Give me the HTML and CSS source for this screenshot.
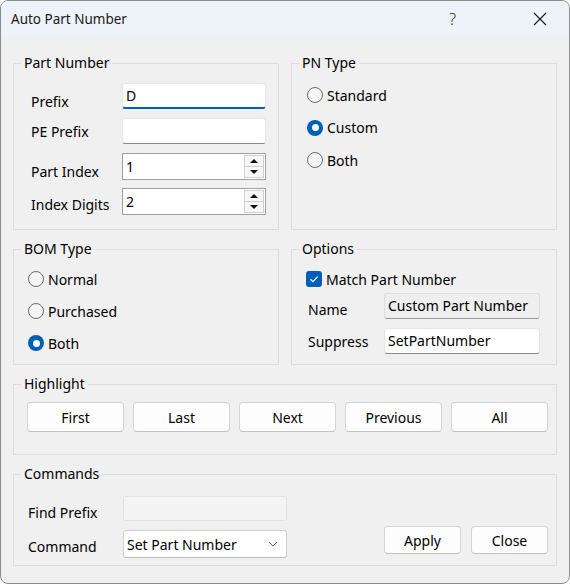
FILE: index.html
```html
<!DOCTYPE html>
<html lang="en">
<head>
  <meta charset="UTF-8">
  <title>Auto Part Number</title>
  <link rel="stylesheet" href="styles.css">
</head>
<body>

<div class="window">
  <div class="titlebar">
    <span class="title">Auto Part Number</span>
    <span class="help">?</span>
    <span class="close">
      <svg width="14" height="14" viewBox="0 0 14 14"><path d="M1 1 L13 13 M13 1 L1 13" stroke="#1a1a1a" stroke-width="1.1" fill="none"/></svg>
    </span>
  </div>

  <div class="content">
    <div class="row-two">
      <fieldset class="group">
        <legend>Part Number</legend>
        <div class="form part-number">
          <span class="lbl low">Prefix</span>
          <div class="field focused">D</div>
          <span class="lbl">PE Prefix</span>
          <div class="field"></div>
          <span class="lbl low">Part Index</span>
          <div class="spin">
            <span class="spin-value">1</span>
            <div class="spin-btns">
              <span class="spin-btn"><span class="tri up"></span></span>
              <span class="spin-btn"><span class="tri down"></span></span>
            </div>
          </div>
          <span class="lbl mid">Index Digits</span>
          <div class="spin">
            <span class="spin-value">2</span>
            <div class="spin-btns">
              <span class="spin-btn"><span class="tri up"></span></span>
              <span class="spin-btn"><span class="tri down"></span></span>
            </div>
          </div>
        </div>
      </fieldset>

      <fieldset class="group">
        <legend>PN Type</legend>
        <div class="radio-list pn-type">
          <div class="radio-row"><span class="radio"></span>Standard</div>
          <div class="radio-row"><span class="radio checked"></span>Custom</div>
          <div class="radio-row"><span class="radio"></span>Both</div>
        </div>
      </fieldset>
    </div>

    <div class="row-two">
      <fieldset class="group">
        <legend>BOM Type</legend>
        <div class="radio-list bom-type">
          <div class="radio-row"><span class="radio"></span>Normal</div>
          <div class="radio-row"><span class="radio"></span>Purchased</div>
          <div class="radio-row"><span class="radio checked"></span>Both</div>
        </div>
      </fieldset>

      <fieldset class="group">
        <legend>Options</legend>
        <div class="options">
          <div class="check-row">
            <span class="checkbox">
              <svg width="10" height="10" viewBox="0 0 10 10"><path d="M1.5 5.2 L4 7.6 L8.6 2.6" stroke="#fff" stroke-width="1.2" fill="none"/></svg>
            </span>
            Match Part Number
          </div>
          <div class="opt-form">
            <span class="lbl mid">Name</span>
            <div class="field readonly">Custom Part Number</div>
            <span class="lbl">Suppress</span>
            <div class="field">SetPartNumber</div>
          </div>
        </div>
      </fieldset>
    </div>

    <fieldset class="group">
      <legend>Highlight</legend>
      <div class="btn-row">
        <button class="btn">First</button>
        <button class="btn">Last</button>
        <button class="btn">Next</button>
        <button class="btn">Previous</button>
        <button class="btn">All</button>
      </div>
    </fieldset>

    <fieldset class="group">
      <legend>Commands</legend>
      <div class="cmd-wrap">
        <div class="cmd-form">
          <span class="lbl mid">Find Prefix</span>
          <div class="field disabled"></div>
          <span class="lbl mid">Command</span>
          <div class="select">
            <span>Set Part Number</span>
            <svg width="10" height="6" viewBox="0 0 10 6"><path d="M1 1 L5 5 L9 1" stroke="#606060" stroke-width="1" fill="none"/></svg>
          </div>
        </div>
        <div class="cmd-btns">
          <button class="btn small">Apply</button>
          <button class="btn small">Close</button>
        </div>
      </div>
    </fieldset>
  </div>
</div>

</body>
</html>
```

FILE: styles.css
```css
html, body {
  margin: 0;
  padding: 0;
  background-color: #ffffff;
  font-family: "Segoe UI", "Noto Sans", sans-serif;
  font-size: 14px;
  color: #000;
}

.window {
  width: 570px;
  height: 584px;
  box-sizing: border-box;
  border: 1px solid #8c8c8c;
  border-radius: 8px;
  background-color: #f0f0f0;
  overflow: hidden;
}

.titlebar {
  height: 36px;
  background-color: #eef2f9;
  display: flex;
  align-items: center;
  padding-left: 10px;
}

.title {
  flex: 1;
  font-size: 13.5px;
  color: #1a1a1a;
}

.help {
  font-size: 16px;
  font-weight: 300;
  color: #1a1a1a;
  margin-right: 77px;
}

.close {
  display: flex;
  margin-right: 22px;
}

.content {
  padding: 17px 12px 0 12px;
  display: flex;
  flex-direction: column;
  gap: 10px;
}

.row-two {
  display: grid;
  grid-template-columns: 1fr 1fr;
  gap: 12px;
}

.group {
  margin: 0;
  padding: 0;
  min-width: 0;
  border: 1px solid #dcdcdc;
}

.group legend {
  margin-left: 7px;
  padding: 0 3px;
  line-height: 18px;
}

.lbl {
  padding-top: 5px;
  line-height: 18px;
}

.lbl.low {
  padding-top: 10px;
}

.lbl.mid {
  padding-top: 8px;
}

/* part number */
.part-number {
  padding: 11px 12px 15px 17px;
}

.form {
  display: grid;
  grid-template-columns: 91px 144px;
  grid-auto-rows: 26px;
  row-gap: 9px;
}

.field {
  box-sizing: border-box;
  height: 26px;
  background-color: #fff;
  border: 1px solid #e6e6e6;
  border-bottom: 1px solid #8a8a8a;
  border-radius: 3px;
  padding: 2px 3px 0 3px;
  line-height: 20px;
  white-space: nowrap;
}

.field.focused {
  border-bottom: 2px solid #005fb8;
}

.field.readonly {
  background-color: #efefef;
  border-color: #dedede;
  border-bottom-color: #9a9a9a;
}

.field.disabled {
  background-color: #f4f4f4;
  border-color: #e2e2e2;
}

.spin {
  box-sizing: border-box;
  height: 27px;
  background-color: #fff;
  border: 1px solid #a0a0a0;
  display: flex;
  align-items: center;
  padding: 0 1px 0 3px;
}

.spin-value {
  flex: 1;
}

.spin-btns {
  display: flex;
  flex-direction: column;
}

.spin-btn {
  width: 18px;
  height: 10px;
  border: 1px solid #cfcfcf;
  background-color: #f7f7f7;
  display: flex;
  align-items: center;
  justify-content: center;
}

.spin-btn + .spin-btn {
  border-top: none;
}

.tri {
  width: 0;
  height: 0;
  border-left: 4px solid transparent;
  border-right: 4px solid transparent;
}

.tri.up {
  border-bottom: 4px solid #111;
}

.tri.down {
  border-top: 4px solid #111;
}

/* radios */
.radio-list {
  display: flex;
  flex-direction: column;
  gap: 12px;
}

.pn-type {
  padding: 13px 12px 0 15px;
  gap: 12.5px;
}

.bom-type {
  padding: 11px 12px 10px 14px;
}

.radio-row {
  display: flex;
  align-items: center;
  height: 20px;
  gap: 4px;
}

.radio {
  box-sizing: border-box;
  width: 16px;
  height: 16px;
  border: 1px solid #6b6b6b;
  border-radius: 50%;
  background-color: #f5f5f5;
  display: flex;
  align-items: center;
  justify-content: center;
}

.radio.checked {
  border: none;
  background-color: #005fb8;
}

.radio.checked::after {
  content: "";
  width: 7px;
  height: 7px;
  border-radius: 50%;
  background-color: #fff;
}

/* options */
.options {
  padding: 11px 15px 10px 14px;
}

.check-row {
  display: flex;
  align-items: center;
  height: 20px;
  gap: 4px;
}

.checkbox {
  width: 16px;
  height: 16px;
  border-radius: 3px;
  background-color: #005fb8;
  display: flex;
  align-items: center;
  justify-content: center;
}

.opt-form {
  margin-top: 4px;
  display: grid;
  grid-template-columns: 76px 156px;
  grid-auto-rows: 26px;
  row-gap: 9px;
  padding-left: 2px;
}

/* buttons */
.btn-row {
  display: flex;
  gap: 9px;
  padding: 9px 8px 22px 13px;
}

.btn {
  flex: 1;
  height: 30px;
  font-family: inherit;
  font-size: 14px;
  color: #000;
  background-color: #fdfdfd;
  border: 1px solid #d4d4d4;
  border-bottom-color: #c2c2c2;
  border-radius: 4px;
  padding: 0;
}

/* commands */
.cmd-wrap {
  display: flex;
  align-items: flex-end;
  justify-content: space-between;
  padding: 13px 8px 7px 14px;
}

.cmd-form {
  display: grid;
  grid-template-columns: 95px 164px;
  grid-template-rows: 25px 28px;
  row-gap: 9px;
}

.cmd-form .field {
  height: 25px;
}

.select {
  box-sizing: border-box;
  height: 28px;
  background-color: #fff;
  border: 1px solid #d0d0d0;
  border-bottom-color: #bcbcbc;
  border-radius: 3px;
  display: flex;
  align-items: center;
  justify-content: space-between;
  padding: 0 8px 0 3px;
}

.cmd-btns {
  display: flex;
  gap: 10px;
  margin-bottom: 4px;
}

.btn.small {
  flex: none;
  width: 77px;
  height: 28px;
}
```
